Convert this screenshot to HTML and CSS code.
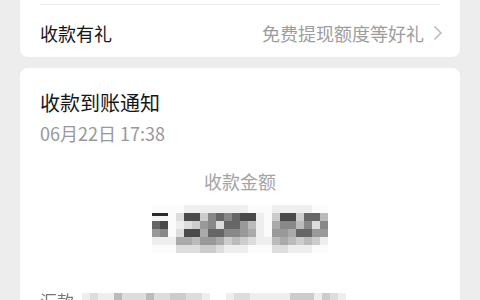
FILE: index.html
```html
<!DOCTYPE html>
<html lang="zh-CN">
<head>
<meta charset="utf-8">
<link rel="stylesheet" href="styles.css">
</head>
<body>
<div class="page">
  <section class="card card-top">
    <div class="row">
      <span class="row-label">收款有礼</span>
      <span class="row-value">免费提现额度等好礼</span>
      <svg class="chev" width="10" height="16" viewBox="0 0 10 16"><path d="M1.5 1.5 L8 8 L1.5 14.5" fill="none" stroke="#b5b5b5" stroke-width="1.4"/></svg>
    </div>
  </section>
  <section class="card card-notice">
    <h1 class="title">收款到账通知</h1>
    <div class="date">06月22日 17:38</div>
    <div class="amount-label">收款金额</div>
    <div class="mosaic">
      <i class="s0"></i><i class="s0"></i><i class="s0"></i><i class="s0"></i><i class="s1"></i><i class="s1"></i><i class="s1"></i><i class="s1"></i><i class="s1"></i><i class="s1"></i><i class="s1"></i><i class="s1"></i><i class="s0"></i><i class="s0"></i><i class="s0"></i><i class="s1"></i><i class="s1"></i><i class="s1"></i><i class="s1"></i><i class="s1"></i><i class="s0"></i><i class="s0"></i>
      <i class="s1 yen"></i><i class="s1 yen"></i><i class="s0"></i><i class="s2"></i><i class="s9"></i><i class="s9"></i><i class="s3"></i><i class="s7"></i><i class="s8"></i><i class="s7"></i><i class="s8"></i><i class="s9"></i><i class="s9"></i><i class="s1"></i><i class="s0"></i><i class="s3"></i><i class="s9"></i><i class="s9"></i><i class="s3"></i><i class="s8"></i><i class="s8"></i><i class="s4"></i>
      <i class="s8"></i><i class="s9"></i><i class="s0"></i><i class="s1"></i><i class="s2"></i><i class="s3"></i><i class="s6"></i><i class="s7"></i><i class="s2"></i><i class="s8"></i><i class="s8"></i><i class="s6"></i><i class="s4"></i><i class="s1"></i><i class="s0"></i><i class="s5"></i><i class="s7"></i><i class="s7"></i><i class="s4"></i><i class="s7"></i><i class="s2"></i><i class="s7"></i>
      <i class="s6"></i><i class="s7"></i><i class="s0"></i><i class="s2"></i><i class="s9"></i><i class="s9"></i><i class="s5"></i><i class="s8"></i><i class="s8"></i><i class="s7"></i><i class="s7"></i><i class="s6"></i><i class="s5"></i><i class="s1"></i><i class="s0"></i><i class="s6"></i><i class="s6"></i><i class="s5"></i><i class="s8"></i><i class="s8"></i><i class="s6"></i><i class="s6"></i>
      <i class="s1"></i><i class="s1"></i><i class="s1"></i><i class="s5"></i><i class="s5"></i><i class="s4"></i><i class="s6"></i><i class="s6"></i><i class="s5"></i><i class="s3"></i><i class="s4"></i><i class="s3"></i><i class="s2"></i><i class="s1"></i><i class="s1"></i><i class="s4"></i><i class="s5"></i><i class="s4"></i><i class="s3"></i><i class="s4"></i><i class="s3"></i><i class="s1"></i>
      <i class="s0"></i><i class="s0"></i><i class="s0"></i><i class="s2"></i><i class="s2"></i><i class="s2"></i><i class="s3"></i><i class="s3"></i><i class="s2"></i><i class="s1"></i><i class="s1"></i><i class="s1"></i><i class="s0"></i><i class="s0"></i><i class="s0"></i><i class="s2"></i><i class="s2"></i><i class="s1"></i><i class="s1"></i><i class="s1"></i><i class="s0"></i><i class="s0"></i>
    </div>
    <div class="info-row">
      <span class="info-label">汇款</span>
      <div class="strip">
        <i class="s1"></i><i class="s2"></i><i class="s1"></i><i class="s1"></i><i class="s4"></i><i class="s2"></i><i class="s2"></i><i class="s2"></i><i class="s4"></i><i class="s2"></i><i class="s2"></i><i class="s3"></i><i class="s3"></i><i class="s2"></i><i class="s2"></i><i class="s1"></i>
      </div>
      <div class="strip">
        <i class="s1"></i><i class="s2"></i><i class="s2"></i><i class="s1"></i><i class="s1"></i><i class="s1"></i><i class="s1"></i><i class="s1"></i><i class="s3"></i><i class="s3"></i><i class="s3"></i><i class="s1"></i><i class="s3"></i><i class="s2"></i><i class="s1"></i>
      </div>
    </div>
  </section>
</div>
</body>
</html>
```
FILE: styles.css
```css
* { box-sizing: border-box; }
html, body {
  margin: 0;
  padding: 0;
  background: #ededed;
  font-family: "Noto Sans CJK SC", "Noto Sans", sans-serif;
  overflow: hidden;
}
.page {
  padding: 0 20px;
  display: flex;
  flex-direction: column;
  gap: 11px;
}
.card {
  background: #fff;
  border-radius: 8px;
}
.card-top {
  border-radius: 0 0 8px 8px;
  padding: 4px 20px 0;
  height: 57px;
}
.row {
  border-top: 1px solid #ececec;
  height: 53px;
  padding-top: 4px;
  display: flex;
  align-items: center;
}
.row-label {
  font-size: 18px;
  color: #161616;
  flex: 1;
}
.row-value {
  font-size: 18px;
  color: #9d9d9d;
}
.chev {
  margin-left: 9px;
  margin-right: -3px;
}
.card-notice {
  padding: 21px 20px 0;
  height: 260px;
}
.title {
  margin: 0;
  font-size: 20px;
  font-weight: normal;
  line-height: 28px;
  color: #161616;
}
.date {
  margin-top: 4px;
  font-size: 18px;
  line-height: 24px;
  color: #999999;
}
.amount-label {
  margin-top: 23px;
  text-align: center;
  font-size: 18px;
  line-height: 26px;
  color: #a3a3a3;
}
.mosaic {
  margin: 11px auto 0;
  display: grid;
  grid-template-columns: repeat(22, 8px);
  grid-auto-rows: 8px;
  width: 176px;
  filter: blur(0.6px);
}
.mosaic i, .strip i { display: block; }
.s0 { background: #fbfbfb; }
.s1 { background: #eeeeee; }
.s2 { background: #dddddd; }
.s3 { background: #cccccc; }
.s4 { background: #bbbbbb; }
.s5 { background: #aaaaaa; }
.s6 { background: #999999; }
.s7 { background: #888888; }
.s8 { background: #666666; }
.s9 { background: #4a4a4a; }
.yen { background: linear-gradient(#2a2a2a 0 3px, #f4f4f4 3px); }
.info-row {
  margin-top: 34px;
  display: flex;
  align-items: flex-start;
  gap: 8px;
  height: 24px;
}
.info-label {
  font-size: 17px;
  line-height: 24px;
  color: #777;
  filter: blur(0.6px);
  margin-top: 2px;
}
.strip {
  display: grid;
  grid-template-columns: repeat(16, 8px);
  grid-auto-rows: 8px;
  margin-top: 6px;
  filter: blur(0.6px);
}
.strip + .strip { margin-left: 8px; }
```
